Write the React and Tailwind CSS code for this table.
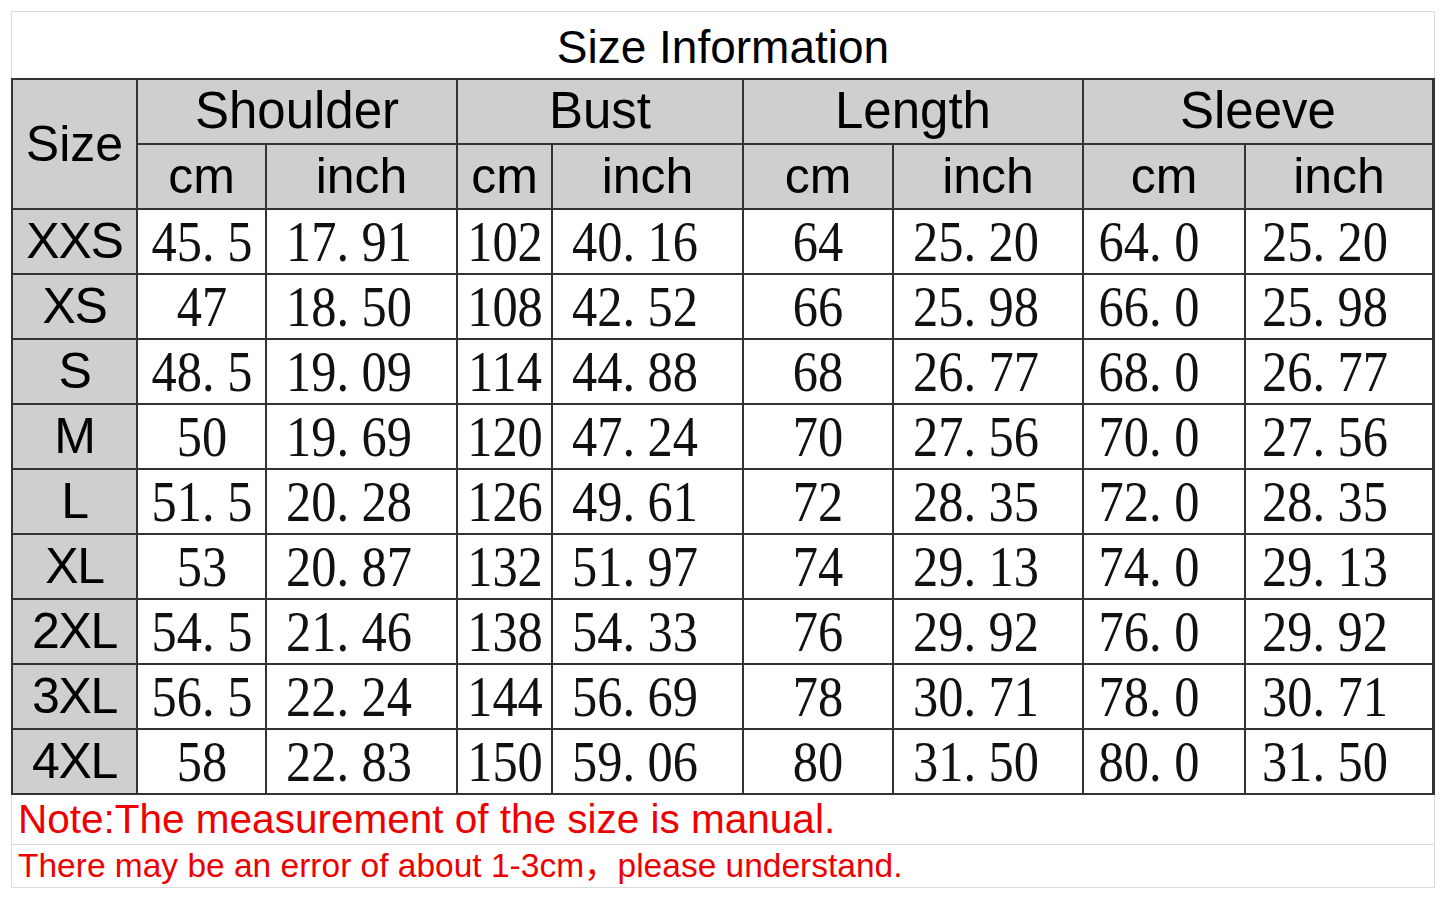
import React from "react";

const rows = [
  ["XXS", "45. 5", "17. 91", "102", "40. 16", "64", "25. 20", "64. 0", "25. 20"],
  ["XS", "47", "18. 50", "108", "42. 52", "66", "25. 98", "66. 0", "25. 98"],
  ["S", "48. 5", "19. 09", "114", "44. 88", "68", "26. 77", "68. 0", "26. 77"],
  ["M", "50", "19. 69", "120", "47. 24", "70", "27. 56", "70. 0", "27. 56"],
  ["L", "51. 5", "20. 28", "126", "49. 61", "72", "28. 35", "72. 0", "28. 35"],
  ["XL", "53", "20. 87", "132", "51. 97", "74", "29. 13", "74. 0", "29. 13"],
  ["2XL", "54. 5", "21. 46", "138", "54. 33", "76", "29. 92", "76. 0", "29. 92"],
  ["3XL", "56. 5", "22. 24", "144", "56. 69", "78", "30. 71", "78. 0", "30. 71"],
  ["4XL", "58", "22. 83", "150", "59. 06", "80", "31. 50", "80. 0", "31. 50"],
];

const groups = ["Shoulder", "Bust", "Length", "Sleeve"];

// extra right padding per value column: the inch values sit left of centre
const pads = ["", "pr-[26px]", "", "pr-[26px]", "", "pr-[24px]", "pr-[30px]", "pr-[28px]"];

const sans = "font-['Liberation_Sans',Arial,sans-serif]";
const serif = "font-['Liberation_Serif','Times_New_Roman',serif]";

export default function App() {
  return (
    <div className="bg-white w-[1445px] h-[898px] pt-[11px] pl-[11px]">
      <div className="w-[1424px] border border-[#dcdcdc] bg-white">
        <div className={`h-[66px] flex items-center justify-center pt-[4px] text-[46px] text-black ${sans}`}>
          Size Information
        </div>
        <div className="grid grid-cols-[123px_127px_189px_93px_189px_148px_188px_160px_186px] auto-rows-[63px] gap-[2px] border-2 border-[#333] bg-[#333] -mx-px">
          <div className={`row-span-2 bg-[#cfcfcf] flex items-center justify-center text-[50px] ${sans}`}>
            Size
          </div>
          {groups.map((g) => (
            <div key={g} className={`col-span-2 bg-[#cfcfcf] flex items-center justify-center text-[51px] ${sans}`}>
              {g}
            </div>
          ))}
          {groups.map((g) => (
            <React.Fragment key={g + "u"}>
              <div className={`bg-[#cfcfcf] flex items-center justify-center text-[50px] ${sans}`}>cm</div>
              <div className={`bg-[#cfcfcf] flex items-center justify-center text-[50px] ${sans}`}>inch</div>
            </React.Fragment>
          ))}
          {rows.map((r) => (
            <React.Fragment key={r[0]}>
              <div className={`bg-[#cfcfcf] flex items-center justify-center text-[50px] tracking-tight ${sans}`}>
                {r[0]}
              </div>
              {r.slice(1).map((v, i) => (
                <div
                  key={i}
                  className={`bg-white flex items-center justify-center ${pads[i]}`}
                >
                  <span className={`inline-block whitespace-pre text-[56px] leading-none scale-x-[0.9] text-[#111] ${serif}`}>
                    {v}
                  </span>
                </div>
              ))}
            </React.Fragment>
          ))}
        </div>
        <div className={`h-[50px] flex items-center pl-[6px] text-[40.5px] text-[#ee0000] border-b border-[#dcdcdc] ${sans}`}>
          Note:The measurement of the size is manual.
        </div>
        <div className={`h-[42px] flex items-center pl-[6px] text-[33.5px] text-[#ee0000] font-['Liberation_Sans','Noto_Sans_CJK_SC',sans-serif]`}>
          There may be an error of about 1-3cm，please understand.
        </div>
      </div>
    </div>
  );
}
